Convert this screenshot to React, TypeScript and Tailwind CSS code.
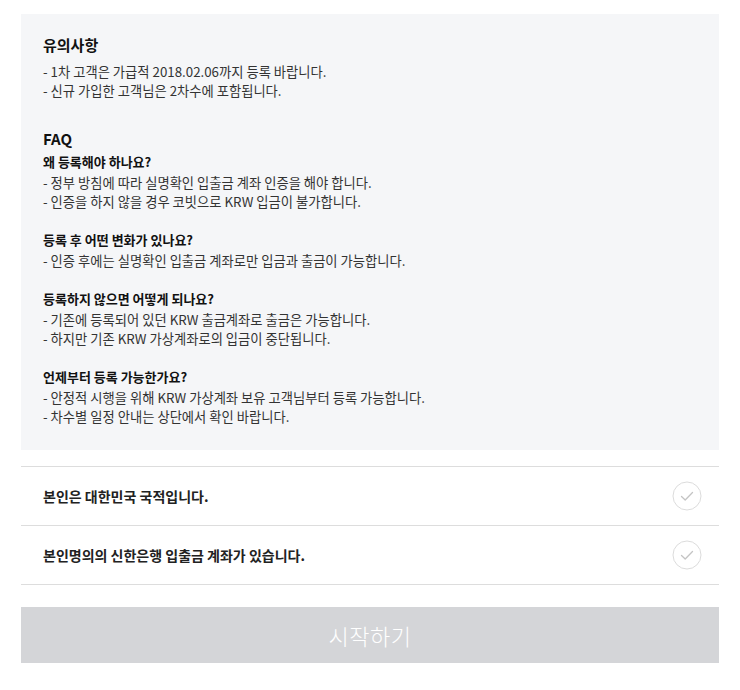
import React from "react";

const notices = [
  "- 1차 고객은 가급적 2018.02.06까지 등록 바랍니다.",
  "- 신규 가입한 고객님은 2차수에 포함됩니다.",
];

const faqs = [
  {
    q: "왜 등록해야 하나요?",
    a: [
      "- 정부 방침에 따라 실명확인 입출금 계좌 인증을 해야 합니다.",
      "- 인증을 하지 않을 경우 코빗으로 KRW 입금이 불가합니다.",
    ],
  },
  {
    q: "등록 후 어떤 변화가 있나요?",
    a: ["- 인증 후에는 실명확인 입출금 계좌로만 입금과 출금이 가능합니다."],
  },
  {
    q: "등록하지 않으면 어떻게 되나요?",
    a: [
      "- 기존에 등록되어 있던 KRW 출금계좌로 출금은 가능합니다.",
      "- 하지만 기존 KRW 가상계좌로의 입금이 중단됩니다.",
    ],
  },
  {
    q: "언제부터 등록 가능한가요?",
    a: [
      "- 안정적 시행을 위해 KRW 가상계좌 보유 고객님부터 등록 가능합니다.",
      "- 차수별 일정 안내는 상단에서 확인 바랍니다.",
    ],
  },
];

const checks = ["본인은 대한민국 국적입니다.", "본인명의의 신한은행 입출금 계좌가 있습니다."];

function CheckCircle() {
  return (
    <svg width="30" height="30" viewBox="0 0 30 30" fill="none">
      <circle cx="15" cy="15" r="14" stroke="#dcdcdc" strokeWidth="1" fill="#fff" />
      <path d="M9.5 15.5 L13.2 19 L20.5 11.5" stroke="#c4c4c4" strokeWidth="1.3" strokeLinecap="round" strokeLinejoin="round" />
    </svg>
  );
}

export default function App() {
  return (
    <div
      className="bg-white w-[740px] h-[690px] px-[21px] pt-[14px] text-[#333]"
      style={{ fontFamily: '"Noto Sans CJK KR", "Noto Sans", sans-serif' }}
    >
      <div className="bg-[#f5f6f8] px-[22px] pt-[20px] pb-[24px]">
        <h3 className="text-[15px] leading-[22px] font-bold text-[#111]">유의사항</h3>
        <ul className="mt-[6px]">
          {notices.map((t) => (
            <li key={t} className="text-[13.3px] leading-[19px]">{t}</li>
          ))}
        </ul>

        <h3 className="mt-[28px] text-[15px] leading-[22px] font-bold text-[#111]">FAQ</h3>
        <div className="mt-[2px] flex flex-col gap-[19px]">
          {faqs.map((f) => (
            <div key={f.q}>
              <h4 className="text-[13px] leading-[19px] font-bold text-[#111]">{f.q}</h4>
              <ul className="mt-[2px]">
                {f.a.map((t) => (
                  <li key={t} className="text-[13.3px] leading-[19px]">{t}</li>
                ))}
              </ul>
            </div>
          ))}
        </div>
      </div>

      <div className="mt-[16px] border-t border-[#dddddd]">
        {checks.map((c) => (
          <div key={c} className="h-[59px] border-b border-[#dddddd] flex items-center justify-between pl-[22px] pr-[17px]">
            <span className="text-[14px] font-bold text-[#222]">{c}</span>
            <CheckCircle />
          </div>
        ))}
      </div>

      <button className="mt-[22px] w-full h-[56px] bg-[#d4d5d8] text-white text-[22px] font-light tracking-[0.5px]">
        시작하기
      </button>
    </div>
  );
}
